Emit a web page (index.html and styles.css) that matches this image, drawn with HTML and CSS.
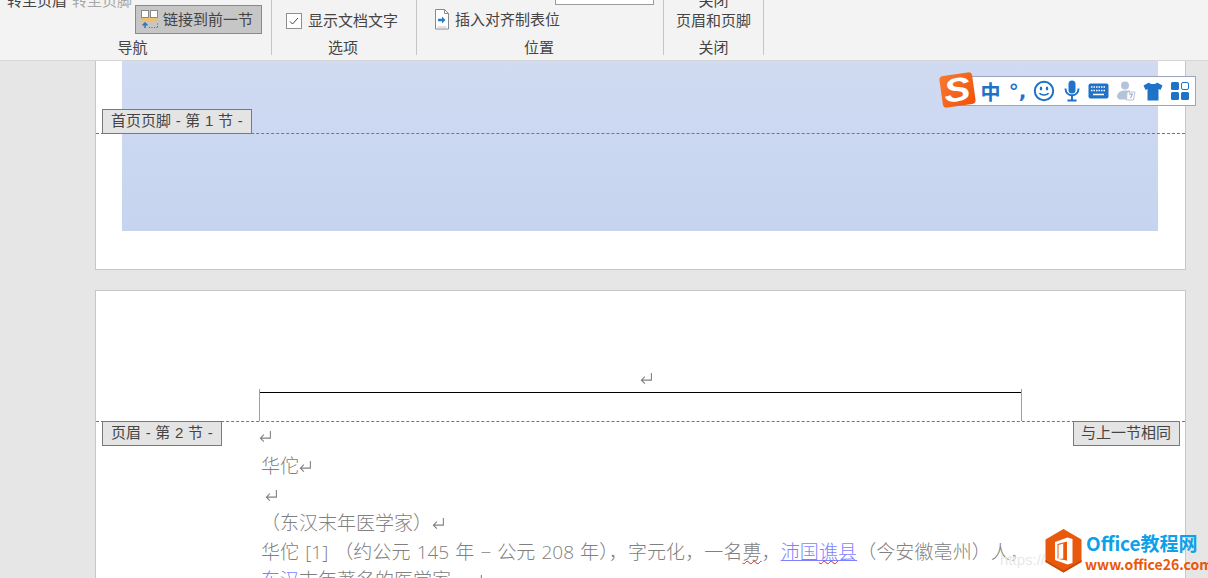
FILE: index.html
```html
<!DOCTYPE html>
<html lang="zh-CN">
<head>
<meta charset="utf-8">
<title>页眉和页脚</title>
<link rel="stylesheet" href="styles.css">
</head>
<body>
<svg class="defs" width="0" height="0" aria-hidden="true">
  <symbol id="ret" viewBox="0 0 12 12"><path d="M10.500 1v6.500H1.500M4.500 4.300L1.300 7.500L4.500 10.700" fill="none" stroke="currentColor" stroke-width="1"/></symbol>
</svg>

<header class="ribbon">
  <section class="group group-nav">
    <div class="group-body nav-body">
      <div class="clipped-row"><span>转至页眉</span><span class="muted">转至页脚</span></div>
      <button class="link-btn">
        <svg class="link-icon" width="20" height="20" viewBox="0 0 20 20">
          <rect x="1.500" y="0.500" width="7" height="7" fill="#fff" stroke="#8a8a8a"/>
          <rect x="10.500" y="0.500" width="7" height="7" fill="#fff" stroke="#8a8a8a"/>
          <rect x="1" y="8" width="8" height="4" fill="#ecc06f"/>
          <rect x="10" y="8" width="8" height="4" fill="#ecc06f"/>
          <path d="M5 18v-5M2.500 15.500L5 13l2.500 2.500" fill="none" stroke="#2f74b5" stroke-width="1.500"/>
          <path d="M9 17.500h9M17.500 17v-5" fill="none" stroke="#2f74b5" stroke-dasharray="1 1.500"/>
        </svg>
        <span>链接到前一节</span>
      </button>
    </div>
    <div class="group-label">导航</div>
  </section>
  <section class="group group-opt">
    <div class="group-body opt-body">
      <span class="check"><svg width="14" height="14" viewBox="0 0 14 14"><path d="M3 7.500l2.500 2.500L11 4" fill="none" stroke="#444"/></svg></span>
      <span>显示文档文字</span>
    </div>
    <div class="group-label">选项</div>
  </section>
  <section class="group group-pos">
    <div class="group-body pos-body">
      <div class="pos-input"></div>
      <div class="pos-row">
        <svg width="16" height="21" viewBox="0 0 16 21"><path d="M1.500.500h9l4 4v15.500h-13z" fill="#fff" stroke="#8a8a8a"/><path d="M3.500 18h9" stroke="#c4c4c4"/><path d="M10.500.500v4h4" fill="none" stroke="#8a8a8a"/><path d="M4 11h4" fill="none" stroke="#2f7cc4" stroke-width="2.500"/><path d="M8 7.500L11.500 11L8 14.500z" fill="#2f7cc4"/></svg>
        <span>插入对齐制表位</span>
      </div>
    </div>
    <div class="group-label">位置</div>
  </section>
  <section class="group group-close">
    <div class="group-body close-body">
      <div>关闭</div>
      <div>页眉和页脚</div>
    </div>
    <div class="group-label">关闭</div>
  </section>
</header>

<main class="doc">
  <article class="page page-one">
    <div class="footer-fill"></div>
    <div class="rule rule-one"></div>
    <div class="tag tag-one">首页页脚 - 第 1 节 -</div>
  </article>

  <article class="page page-two">
    <div class="page-header">
      <svg class="ret ret-head"><use href="#ret"/></svg>
      <div class="hdr-table"></div>
      <div class="tag tag-two">页眉 - 第 2 节 -</div>
      <div class="tag tag-same">与上一节相同</div>
    </div>
    <div class="page-text">
      <p class="line short"><svg class="ret"><use href="#ret"/></svg></p>
      <p class="line">华佗<svg class="ret"><use href="#ret"/></svg></p>
      <p class="line indent"><svg class="ret"><use href="#ret"/></svg></p>
      <p class="line">（东汉末年医学家）<svg class="ret"><use href="#ret"/></svg></p>
      <p class="line just">华佗 [1] （约公元 145 年 − 公元 208 年），字元化，一名<span class="wavy">旉</span>，<a class="link">沛国<span class="wavy">谯</span>县</a>（今安徽亳州）人，</p>
      <p class="line"><a class="link">东汉</a>末年著名的医学家。<svg class="ret"><use href="#ret"/></svg></p>
    </div>
  </article>
</main>

<aside class="ime">
  <div class="ime-logo"><span>S</span></div>
  <span class="ime-cell ime-zh">中</span>
  <span class="ime-cell ime-punc">°,</span>
  <span class="ime-cell ime-smile"><svg width="22" height="22" viewBox="0 0 22 22"><circle cx="11" cy="11" r="9.200" fill="none" stroke="#1e72c8" stroke-width="2"/><ellipse cx="8" cy="8.500" rx="1.200" ry="2" fill="#1e72c8"/><ellipse cx="14" cy="8.500" rx="1.200" ry="2" fill="#1e72c8"/><path d="M6.500 13c1.200 2.500 7.800 2.500 9 0" fill="none" stroke="#1e72c8" stroke-width="1.500"/></svg></span>
  <span class="ime-cell"><svg width="18" height="22" viewBox="0 0 18 22"><rect x="5.500" y="0.500" width="7" height="13" rx="3.500" fill="#1e72c8"/><path d="M2.500 8.500c0 9 13 9 13 0M9 15v5M4.500 20.500h9" fill="none" stroke="#1e72c8" stroke-width="2"/></svg></span>
  <span class="ime-cell"><svg width="21" height="16" viewBox="0 0 21 16"><rect x="0.500" y="0.500" width="20" height="15" rx="2" fill="#1e72c8"/><path d="M3 4h15M3 7.500h15" stroke="#fff" stroke-width="1.500" stroke-dasharray="1.500 1"/><path d="M5 11.500h11" stroke="#fff" stroke-width="1.500"/></svg></span>
  <span class="ime-cell"><svg width="20" height="20" viewBox="0 0 20 20"><circle cx="9" cy="4.500" r="4" fill="#b5c3da"/><path d="M1 16c0-4 3-6.500 8-6.500h5v9H3z" fill="#b5c3da"/><path d="M11 11h8l-1.500 8h-7z" fill="#fff" stroke="#b5c3da"/><path d="M13 13h3.500l-2 4" fill="none" stroke="#8b9cb8"/></svg></span>
  <span class="ime-cell"><svg width="20" height="19" viewBox="0 0 20 19"><path d="M6 .500c1 2 7 2 8 0l5.500 3-2 4.500-2-1V18.500H4.500V7l-2 1-2-4.500z" fill="#1e72c8"/></svg></span>
  <span class="ime-cell"><svg width="18" height="18" viewBox="0 0 18 18"><rect x="0" y="0" width="8" height="8" rx="1.500" fill="#1e72c8"/><rect x="10.500" y="0.500" width="7" height="7" rx="1.500" fill="#fff" stroke="#1e72c8"/><rect x="0" y="10" width="8" height="8" rx="1.500" fill="#1e72c8"/><rect x="10" y="10" width="8" height="8" rx="1.500" fill="#1e72c8"/></svg></span>
</aside>

<aside class="brand">
  <span class="ghost-url">https://</span>
  <svg class="brand-hex" width="37" height="44" viewBox="0 0 37 44">
    <path d="M18.500 0L36.500 10.500V33L18.500 43.500L.500 33V10.500z" fill="#e8590c"/>
    <path d="M18.500 43.500L.500 33v-2l18 10.500 18-10.500v2z" fill="#c94a08"/>
    <path d="M22.500 8.500L10 13v18l12.500 4.500 5-1.500V10z" fill="#fff"/>
    <path d="M22 12.500v19l-8.500-1.500 5-.5V14.500L13.500 16v13.500h-1V15z" fill="#e8590c"/>
    <path d="M18.500 14.500l3.500-1v18l-3.500-1.500z" fill="#e8590c"/>
  </svg>
  <div class="brand-text">
    <div class="brand-name">Office教程网</div>
    <div class="brand-url">www.office26.com</div>
  </div>
</aside>
</body>
</html>
```

FILE: styles.css
```css
* { box-sizing: border-box; }
html, body { margin: 0; height: 100%; }
body {
  width: 1208px;
  height: 578px;
  overflow: hidden;
  position: relative;
  background: #e6e6e6;
  font-family: "Liberation Sans", "Noto Sans CJK SC", sans-serif;
  color: #444;
}
.defs { position: absolute; }

/* ribbon */
.ribbon {
  display: flex;
  height: 61px;
  background: #f3f3f3;
  border-bottom: 1px solid #d6d6d6;
  overflow: hidden;
  font-size: 15px;
  line-height: 20px;
}
.group {
  display: flex;
  flex-direction: column;
  height: 55px;
  border-right: 1px solid #c6c6c6;
}
.group-body { flex: 1; min-height: 0; }
.group-label { height: 20px; text-align: center; line-height: 20px; margin-bottom: -3px; }
.group-nav { width: 272px; }
.group-nav .group-label { padding-right: 6px; }
.group-opt { width: 145px; }
.group-opt .group-label { padding-right: 2px; }
.group-pos { width: 247px; }
.group-pos .group-label { padding-right: 2px; }
.group-close { width: 100px; }

.nav-body { margin-top: -9px; padding-left: 7px; }
.clipped-row { display: flex; gap: 5px; height: 14px; }
.muted { color: #a8a8a8; }
.link-btn {
  display: flex;
  align-items: center;
  gap: 3px;
  width: 127px;
  height: 29px;
  margin: 0 0 0 128px;
  padding: 0 0 0 4px;
  background: #c6c6c6;
  border: 1px solid #8a8a8a;
  font: inherit;
  color: inherit;
}
.link-icon { flex: none; }

.opt-body { display: flex; align-items: center; gap: 6px; padding: 3px 0 0 14px; }
.check {
  display: flex;
  align-items: center;
  justify-content: center;
  width: 16px;
  height: 16px;
  background: #fff;
  border: 1px solid #8f8f8f;
}

.pos-body { padding-left: 17px; }
.pos-input {
  width: 99px;
  height: 5px;
  margin: 0 0 4px 121px;
  background: #fff;
  border: 1px solid #9a9a9a;
  border-top: 0;
}
.pos-row { display: flex; align-items: center; gap: 5px; height: 21px; }

.close-body { margin-top: -9px; text-align: center; }
.close-body div { height: 20px; line-height: 20px; }

/* document */
.doc { height: 517px; overflow: hidden; padding: 0 22px 0 95px; }
.page {
  position: relative;
  background: #fff;
  border: 1px solid #c6c6c6;
}
.page-one { height: 209px; border-top: 0; padding: 0 27px 0 26px; }
.footer-fill { height: 170px; background: linear-gradient(#d0dbf2, #c6d4ef); }
.rule { position: absolute; left: 0; right: 0; border-top: 1px dashed #777; }
.rule-one { top: 72px; }
.tag {
  position: absolute;
  height: 25px;
  background: #e4e4e4;
  border: 1px solid #7a7a7a;
  font-size: 15px;
  line-height: 21px;
  word-spacing: .5px;
  white-space: nowrap;
  color: #444;
}
.tag-one { left: 6px; top: 48px; width: 150px; padding-left: 8px; }
.page-two { margin-top: 20px; height: 320px; }
.page-header {
  position: relative;
  height: 131px;
  border-bottom: 1px dashed #777;
  display: flex;
  flex-direction: column;
  justify-content: flex-end;
}
.tag-two { left: 6px; top: 130px; width: 120px; padding-left: 8px; }
.tag-same { right: 5px; top: 130px; width: 107px; padding-left: 7px; }
.hdr-table {
  position: relative;
  width: 763px;
  height: 29px;
  margin-left: 163px;
  border-top: 1px solid #000;
  border-left: 1px solid #a0a0a0;
  border-right: 1px solid #a0a0a0;
}
.hdr-table::before, .hdr-table::after {
  content: "";
  position: absolute;
  top: -4px;
  height: 4px;
  border-left: 1px solid #a0a0a0;
}
.hdr-table::before { left: -1px; }
.hdr-table::after { right: -1px; }
.ret { width: 13px; height: 13px; color: #808080; margin-left: 0; }
.ret-head { position: absolute; left: 544px; top: 81px; }

.page-text {
  padding: 0 0 0 165px;
  width: 924px;
  font-family: "Open Sans", "Noto Sans CJK SC", sans-serif;
  font-size: 19px;
  font-weight: 300;
  color: #808080;
}
.line { margin: 0; height: 28.500px; line-height: 28.500px; white-space: nowrap; }
.short { height: 32px; line-height: 32px; margin-top: -2px; }
.short .ret { margin-left: -2px; }
.indent .ret { margin-left: 4px; }
.just { width: 768px; white-space: normal; word-spacing: 1px; text-align: justify; text-align-last: justify; }
.link { color: #7f7fff; text-decoration: underline; }
.wavy { text-decoration: underline wavy #e02020; text-decoration-thickness: 1px; }

/* ime toolbar */
.ime {
  position: absolute;
  left: 955px;
  top: 76px;
  width: 241px;
  height: 30px;
  display: flex;
  align-items: center;
  padding-left: 21px;
  background: #fff;
  border: 1px solid #9aa5c0;
}
.ime-cell {
  display: flex;
  align-items: center;
  justify-content: center;
  flex: none;
  width: 27px;
  height: 28px;
}
.ime-smile { padding-right: 1px; }
.ime-zh { font-size: 20px; font-weight: 700; color: #1e72c8; }
.ime-punc { font-size: 20px; font-weight: 700; color: #1e72c8; font-family: "DejaVu Sans", sans-serif; }
.ime-logo {
  position: absolute;
  left: -15px;
  top: -3px;
  width: 33px;
  height: 32px;
  border-radius: 4px;
  background: linear-gradient(135deg, #f77a30, #f2500a);
  transform: rotate(-8deg);
  display: flex;
  align-items: center;
  justify-content: center;
  overflow: hidden;
}
.ime-logo span {
  font: italic 700 33px/30px "Liberation Sans", sans-serif;
  color: #fff;
  transform: scaleX(1.200);
}

/* brand watermark */
.brand {
  position: absolute;
  left: 1045px;
  top: 529px;
  display: flex;
  gap: 4px;
}
.brand-hex { flex: none; position: relative; }
.ghost-url {
  position: absolute;
  left: -45px;
  top: 22px;
  font: 15px "Liberation Sans", sans-serif;
  color: #e8e8e8;
  white-space: nowrap;
}
.brand-text { position: relative; font-family: "Noto Sans CJK SC", sans-serif; font-weight: 700; }
.brand-name { font-size: 19px; line-height: 28px; color: #0ea1ea; white-space: nowrap; }
.brand-url { font-size: 14px; line-height: 14px; margin-left: -1px; color: #e8590c; white-space: nowrap; }
```
